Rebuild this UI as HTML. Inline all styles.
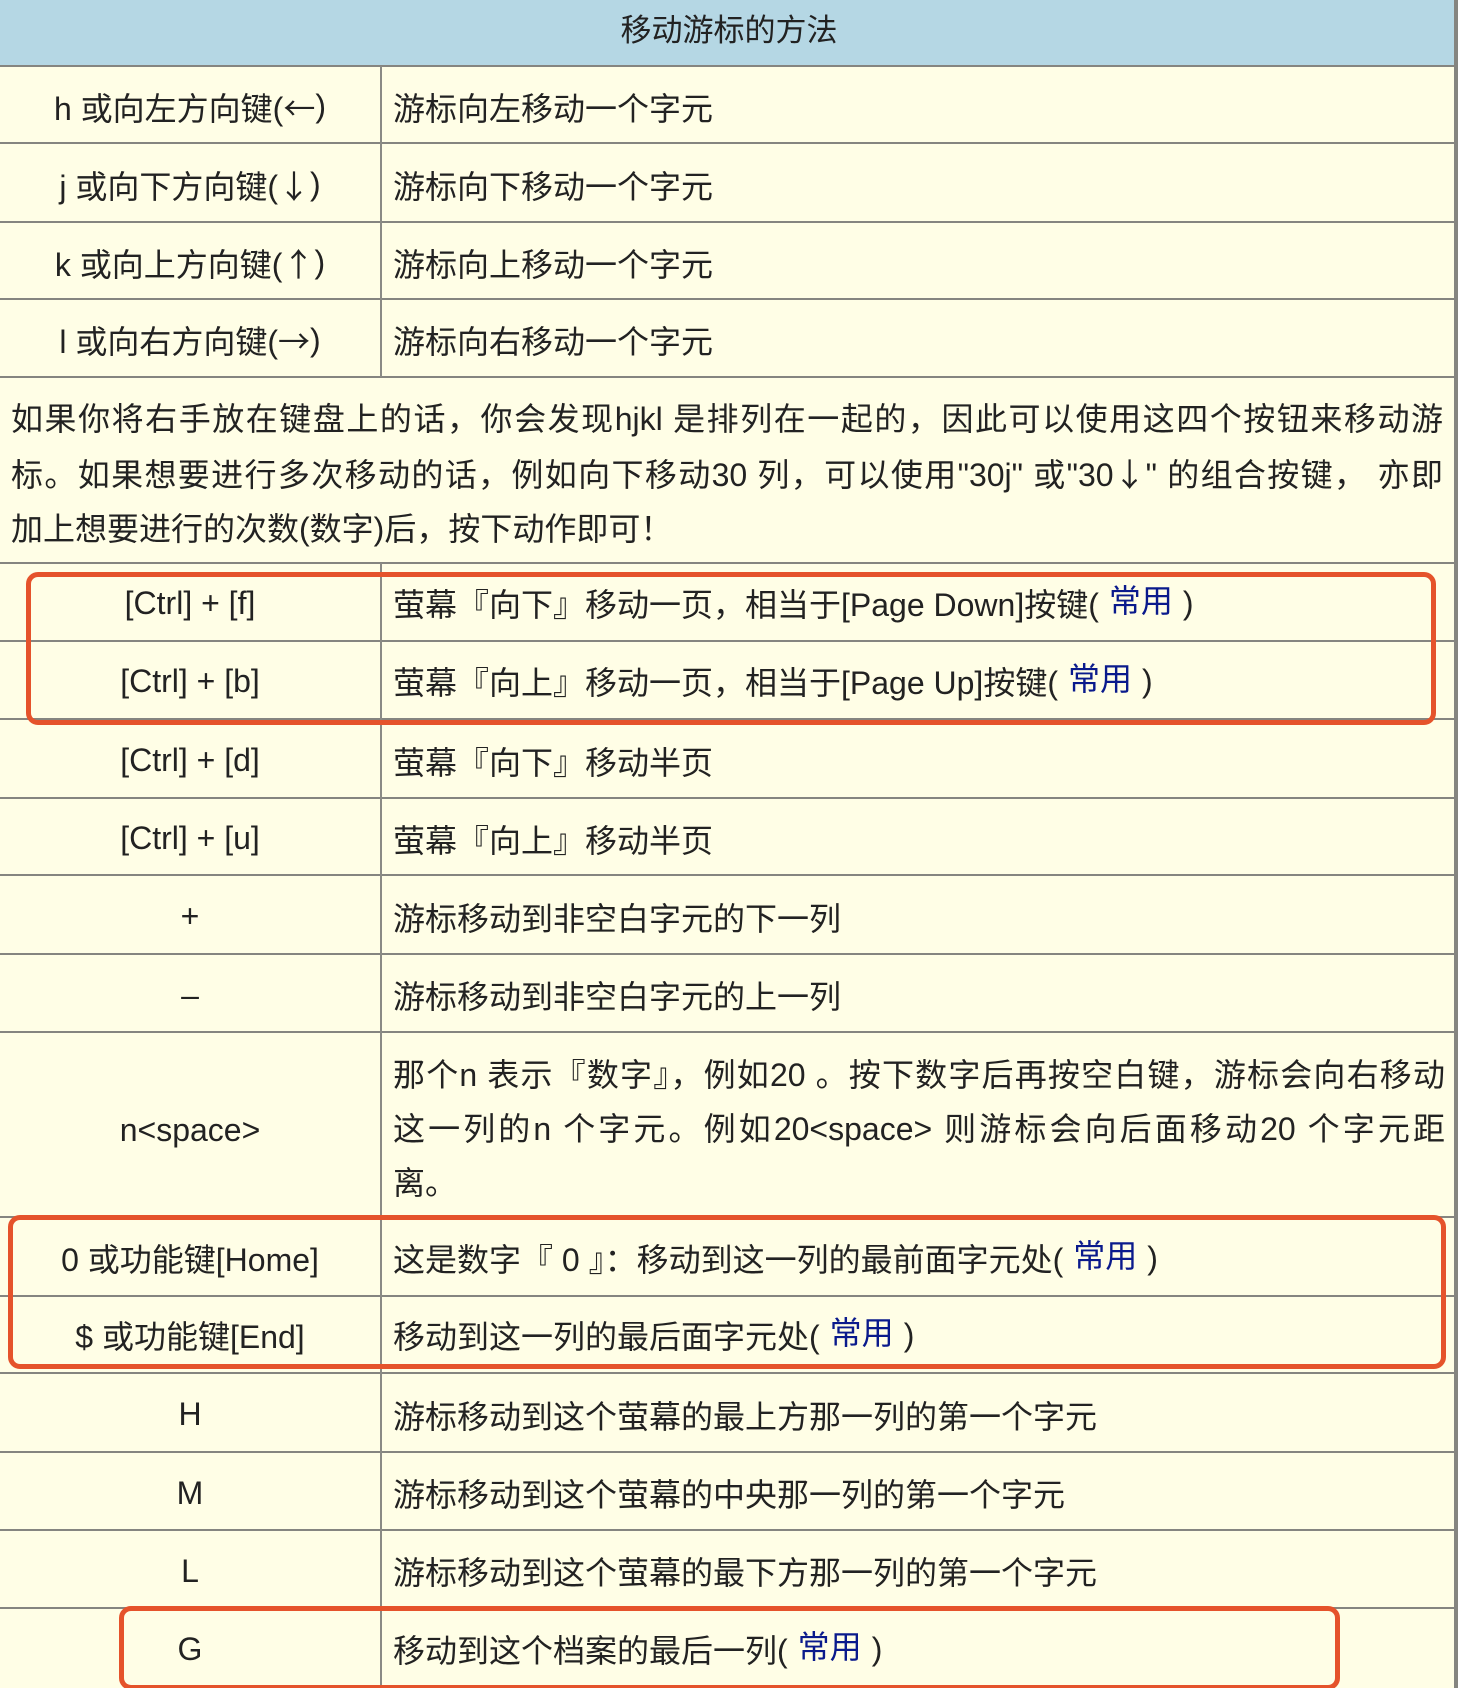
<!DOCTYPE html>
<html><head><meta charset="utf-8">
<style>
*{margin:0;padding:0;box-sizing:border-box}
html,body{width:1458px;height:1688px;overflow:hidden;background:#fffee6}
body{position:relative;font-family:"Liberation Sans","Noto Sans CJK SC",sans-serif;color:#222;font-size:32px}
.hdr{position:absolute;left:0;top:0;width:1458px;height:66px;background:#b5d7e4;text-align:center;line-height:62px;font-size:31px}
.hl{position:absolute;left:0;width:1458px;height:2px;background:#858580}
.vl{position:absolute;left:380px;width:2px;background:#8a8a85}
.rb{position:absolute;left:1454px;top:0;width:4px;height:1688px;background:#858580}
.c1{position:absolute;left:0;width:380px;display:flex;align-items:center;justify-content:center;white-space:nowrap}
.c2{position:absolute;left:393px;width:1052px;display:flex;align-items:center;white-space:nowrap}
.b{color:#0a1a8c;position:relative;top:-4px;margin-left:10px;margin-right:10px}
.a{font-family:"Noto Sans CJK SC",sans-serif}
.p{position:absolute;left:11px;width:1432px;top:392px;line-height:54px}
.j{text-align:justify;text-align-last:justify;white-space:nowrap;display:block}
.n{position:absolute;left:393px;width:1052px;top:1048px;line-height:54px}
.box{position:absolute;border:5px solid #e5532b;border-radius:12px}
</style></head><body>
<div class="hdr">移动游标的方法</div>
<div class="rb"></div>

<div class="hl" style="top:65px"></div>
<div class="hl" style="top:142px"></div>
<div class="hl" style="top:221px"></div>
<div class="hl" style="top:298px"></div>
<div class="hl" style="top:376px"></div>
<div class="hl" style="top:562px"></div>
<div class="hl" style="top:640px"></div>
<div class="hl" style="top:718px"></div>
<div class="hl" style="top:797px"></div>
<div class="hl" style="top:874px"></div>
<div class="hl" style="top:953px"></div>
<div class="hl" style="top:1031px"></div>
<div class="hl" style="top:1216px"></div>
<div class="hl" style="top:1295px"></div>
<div class="hl" style="top:1372px"></div>
<div class="hl" style="top:1451px"></div>
<div class="hl" style="top:1529px"></div>
<div class="hl" style="top:1607px"></div>

<div class="vl" style="top:66px;height:311px"></div>
<div class="vl" style="top:563px;height:1125px"></div>

<div class="c1" style="top:69px;height:75px">h 或向左方向键(<span class="a">←</span>)</div>
<div class="c2" style="top:69px;height:75px">游标向左移动一个字元</div>
<div class="c1" style="top:146px;height:77px">j 或向下方向键(<span class="a">↓</span>)</div>
<div class="c2" style="top:146px;height:77px">游标向下移动一个字元</div>
<div class="c1" style="top:225px;height:75px">k 或向上方向键(<span class="a">↑</span>)</div>
<div class="c2" style="top:225px;height:75px">游标向上移动一个字元</div>
<div class="c1" style="top:302px;height:76px">l 或向右方向键(<span class="a">→</span>)</div>
<div class="c2" style="top:302px;height:76px">游标向右移动一个字元</div>

<div class="p"><span class="j">如果你将右手放在键盘上的话，你会发现hjkl 是排列在一起的，因此可以使用这四个按钮来移动游</span><span class="j">标。如果想要进行多次移动的话，例如向下移动30 列，可以使用"30j" 或"30<span class="a">↓</span>" 的组合按键， 亦即</span><span>加上想要进行的次数(数字)后，按下动作即可！</span></div>

<div class="c1" style="top:567px;height:72px">[Ctrl] + [f]</div>
<div class="c2" style="top:567px;height:72px">萤幕『向下』移动一页，相当于[Page Down]按键(<span class="b">常用</span>)</div>
<div class="c1" style="top:645px;height:72px">[Ctrl] + [b]</div>
<div class="c2" style="top:645px;height:72px">萤幕『向上』移动一页，相当于[Page Up]按键(<span class="b">常用</span>)</div>
<div class="c1" style="top:722px;height:77px">[Ctrl] + [d]</div>
<div class="c2" style="top:722px;height:77px">萤幕『向下』移动半页</div>
<div class="c1" style="top:801px;height:75px">[Ctrl] + [u]</div>
<div class="c2" style="top:801px;height:75px">萤幕『向上』移动半页</div>
<div class="c1" style="top:878px;height:77px">+</div>
<div class="c2" style="top:878px;height:77px">游标移动到非空白字元的下一列</div>
<div class="c1" style="top:957px;height:76px">–</div>
<div class="c2" style="top:957px;height:76px">游标移动到非空白字元的上一列</div>

<div class="c1" style="top:1035px;height:190px">n&lt;space&gt;</div>
<div class="n"><span class="j">那个n 表示『数字』，例如20 。按下数字后再按空白键，游标会向右移动</span><span class="j">这一列的n 个字元。例如20&lt;space&gt; 则游标会向后面移动20 个字元距</span><span>离。</span></div>

<div class="c1" style="top:1222px;height:72px">0 或功能键[Home]</div>
<div class="c2" style="top:1222px;height:72px">这是数字『 0 』：移动到这一列的最前面字元处(<span class="b">常用</span>)</div>
<div class="c1" style="top:1299px;height:72px">$ 或功能键[End]</div>
<div class="c2" style="top:1299px;height:72px">移动到这一列的最后面字元处(<span class="b">常用</span>)</div>
<div class="c1" style="top:1376px;height:77px">H</div>
<div class="c2" style="top:1376px;height:77px">游标移动到这个萤幕的最上方那一列的第一个字元</div>
<div class="c1" style="top:1455px;height:76px">M</div>
<div class="c2" style="top:1455px;height:76px">游标移动到这个萤幕的中央那一列的第一个字元</div>
<div class="c1" style="top:1533px;height:76px">L</div>
<div class="c2" style="top:1533px;height:76px">游标移动到这个萤幕的最下方那一列的第一个字元</div>
<div class="c1" style="top:1611px;height:76px">G</div>
<div class="c2" style="top:1611px;height:76px">移动到这个档案的最后一列(<span class="b">常用</span>)</div>

<div class="box" style="left:26px;top:572px;width:1410px;height:153px"></div>
<div class="box" style="left:8px;top:1215px;width:1438px;height:154px"></div>
<div class="box" style="left:119px;top:1606px;width:1221px;height:84px"></div>
</body></html>
